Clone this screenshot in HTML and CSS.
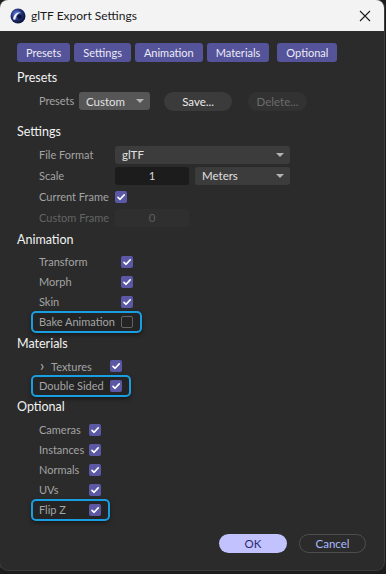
FILE: index.html
```html
<!DOCTYPE html>
<html lang="en">
<head>
    <meta charset="UTF-8">
    <meta name="viewport" content="width=device-width, initial-scale=1.0">
    <title>glTF Export Settings</title>
    <link rel="stylesheet" href="styles.css">
</head>
<body>

    <div class="window">

        <div class="titlebar">
            <svg class="app-icon" width="16" height="16" viewBox="0 0 16 16">
                <defs>
                    <radialGradient id="sphere" cx="40%" cy="38%" r="65%">
                        <stop offset="0" stop-color="#6f8fe8"/>
                        <stop offset="0.55" stop-color="#22307a"/>
                        <stop offset="1" stop-color="#0a0f2e"/>
                    </radialGradient>
                </defs>
                <circle cx="8" cy="8" r="7.5" fill="url(#sphere)"/>
                <path d="M3.2 11.5 C3 7 6.5 3.6 11.5 4.2 C8.2 4.8 5.6 7.4 5.4 11.8 Z" fill="#f2f4ff"/>
                <circle cx="9.4" cy="8.6" r="2.4" fill="#0d1236"/>
            </svg>
            <span class="title">glTF Export Settings</span>
            <svg class="close" width="12" height="12" viewBox="0 0 12 12">
                <path d="M1 1 L11 11 M11 1 L1 11" stroke="#1a1a1a" stroke-width="1.1"/>
            </svg>
        </div>

        <div class="content">

            <div class="tabs">
                <span class="tab">Presets</span>
                <span class="tab">Settings</span>
                <span class="tab">Animation</span>
                <span class="tab">Materials</span>
                <span class="tab last">Optional</span>
            </div>

            <!-- Presets -->
            <section class="group presets">
                <h2>Presets</h2>
                <div class="rows">
                    <div class="row">
                        <span class="label">Presets</span>
                        <span class="select custom">Custom<i class="arrow"></i></span>
                        <button class="btn save">Save...</button>
                        <button class="btn delete">Delete...</button>
                    </div>
                </div>
            </section>

            <!-- Settings -->
            <section class="group settings">
                <h2>Settings</h2>
                <div class="rows">
                    <div class="row">
                        <span class="label">File Format</span>
                        <span class="select wide">glTF<i class="arrow"></i></span>
                    </div>
                    <div class="row">
                        <span class="label">Scale</span>
                        <span class="field">1</span>
                        <span class="select units">Meters<i class="arrow"></i></span>
                    </div>
                    <div class="row">
                        <span class="label">Current Frame</span>
                        <span class="check on"></span>
                    </div>
                    <div class="row">
                        <span class="label disabled">Custom Frame</span>
                        <span class="field off">0</span>
                    </div>
                </div>
            </section>

            <!-- Animation -->
            <section class="group animation">
                <h2>Animation</h2>
                <div class="rows">
                    <div class="row"><span class="label">Transform</span><span class="check on"></span></div>
                    <div class="row"><span class="label">Morph</span><span class="check on"></span></div>
                    <div class="row"><span class="label">Skin</span><span class="check on"></span></div>
                    <div class="row marked"><span class="label">Bake Animation</span><span class="check"></span></div>
                </div>
            </section>

            <!-- Materials -->
            <section class="group materials">
                <h2>Materials</h2>
                <div class="rows">
                    <div class="row">
                        <span class="label"><span class="chevron">&rsaquo;</span>Textures</span>
                        <span class="check on"></span>
                    </div>
                    <div class="row marked"><span class="label">Double Sided</span><span class="check on"></span></div>
                </div>
            </section>

            <!-- Optional -->
            <section class="group optional">
                <h2>Optional</h2>
                <div class="rows">
                    <div class="row"><span class="label">Cameras</span><span class="check on"></span></div>
                    <div class="row"><span class="label">Instances</span><span class="check on"></span></div>
                    <div class="row"><span class="label">Normals</span><span class="check on"></span></div>
                    <div class="row"><span class="label">UVs</span><span class="check on"></span></div>
                    <div class="row marked"><span class="label">Flip Z</span><span class="check on"></span></div>
                </div>
            </section>

            <div class="footer">
                <button class="btn ok">OK</button>
                <button class="btn cancel">Cancel</button>
            </div>

        </div>
    </div>

</body>
</html>
```

FILE: styles.css
```css
* {
    margin: 0;
    padding: 0;
    box-sizing: border-box;
}

body {
    font-family: Lato, 'Noto Sans', sans-serif;
    font-size: 11px;
    background-color: #1c1c1c;
    color: #a4a4a4;
    width: 386px;
    height: 574px;
    overflow: hidden;
}

.window {
    width: 384px;
    height: 570px;
    background-color: #2b2b2b;
    border-radius: 8px;
    overflow: hidden;
    box-shadow: 0 0 0 1px #3c3c3c;
}


.titlebar {
    height: 31px;
    background-color: #f3f3f3;
    display: flex;
    align-items: center;
    padding-left: 10px;
    padding-right: 10px;
}

.app-icon {
    margin-right: 5px;
}

.title {
    font-size: 12px;
    color: #1a1a1a;
    flex: 1;
}

.close {
    margin-right: 3px;
}


.content {
    padding: 12px 0 0 17px;
}

.tabs {
    display: flex;
    gap: 4px;
    height: 19px;
}

.tab {
    background-color: #55539a;
    color: #ececf6;
    font-size: 11px;
    line-height: 19px;
    padding: 0 9px;
    border-radius: 3px;
}

.tab.last {
    margin-left: 4px;
}


h2 {
    font-size: 12.5px;
    font-weight: 400;
    color: #f2f2f2;
    height: 22px;
    line-height: 22px;
    margin-top: 1px;
}

.rows {
    margin-top: 1px;
}

.row {
    display: flex;
    align-items: center;
    height: 20px;
    margin-left: 15px;
    padding: 0 8px 0 7px;
    width: fit-content;
    border-radius: 4px;
}

.row.marked {
    outline: 2px solid #1a9ee2;
    outline-offset: -1px;
    background-color: #242424;
    box-shadow: 0 2px 5px rgba(0, 0, 0, 0.6);
}

.label {
    line-height: 20px;
    white-space: nowrap;
}

.label.disabled {
    color: #646464;
}

.chevron {
    display: inline-block;
    width: 11px;
    margin-left: 1px;
    font-size: 15px;
    color: #b8b8b8;
}


.presets h2 { margin-top: 5px; }
.presets .row { height: 22px; }
.presets .label { width: 40px; }

.settings h2 { margin-top: 9px; }
.settings .row { height: 21px; }
.settings .label { width: 76px; }

.animation .label { width: 82px; }
.materials .label { width: 71px; }

.optional h2 { margin-top: 0; }
.optional .rows { margin-top: 2px; }
.optional .label { width: 50px; }


.select {
    display: flex;
    align-items: center;
    justify-content: space-between;
    height: 18px;
    padding: 0 6px 0 8px;
    border-radius: 3px;
    background-color: #3c3c3c;
    color: #e0e0e0;
    font-size: 11.5px;
}

.select.custom {
    width: 71px;
    background-color: #565656;
    padding-left: 7px;
}

.select.wide {
    width: 175px;
    padding-left: 7px;
}

.select.units {
    width: 95px;
    margin-left: 6px;
    padding-left: 7px;
}

.arrow {
    width: 0;
    height: 0;
    border-left: 4px solid transparent;
    border-right: 4px solid transparent;
    border-top: 4px solid #b4b4b4;
}

.field {
    width: 74px;
    height: 18px;
    line-height: 18px;
    text-align: center;
    background-color: #1c1c1c;
    color: #d8d8d8;
    border-radius: 3px;
    font-size: 11.5px;
}

.field.off {
    background-color: #2f2f2f;
    color: #5e5e5e;
}


.check {
    width: 12px;
    height: 12px;
    border-radius: 2px;
    border: 1.5px solid #646464;
}

.check.on {
    border: none;
    background-color: #5b59a6;
    background-image: url("data:image/svg+xml,%3Csvg xmlns='http://www.w3.org/2000/svg' width='12' height='12' viewBox='0 0 12 12'%3E%3Cpath d='M3 6.3 L5.1 8.3 L9.2 3.9' fill='none' stroke='%23ffffff' stroke-width='1.6' stroke-linecap='round' stroke-linejoin='round'/%3E%3C/svg%3E");
}


.btn {
    font-family: inherit;
    font-size: 11.5px;
    border: none;
    height: 19px;
    border-radius: 10px;
    cursor: pointer;
}

.btn.save {
    width: 68px;
    margin-left: 14px;
    background-color: #3b3b3b;
    color: #ececec;
}

.btn.delete {
    width: 59px;
    margin-left: 16px;
    background-color: #323232;
    color: #6c6c6c;
}

.footer {
    display: flex;
    justify-content: flex-end;
    gap: 12px;
    padding-right: 18px;
    margin-top: 14px;
}

.btn.ok {
    width: 68px;
    background-color: #c2c2ff;
    color: #2b2b6e;
}

.btn.cancel {
    width: 67px;
    background-color: transparent;
    border: 1px solid #4e4e4e;
    color: #a9bcff;
}
```
